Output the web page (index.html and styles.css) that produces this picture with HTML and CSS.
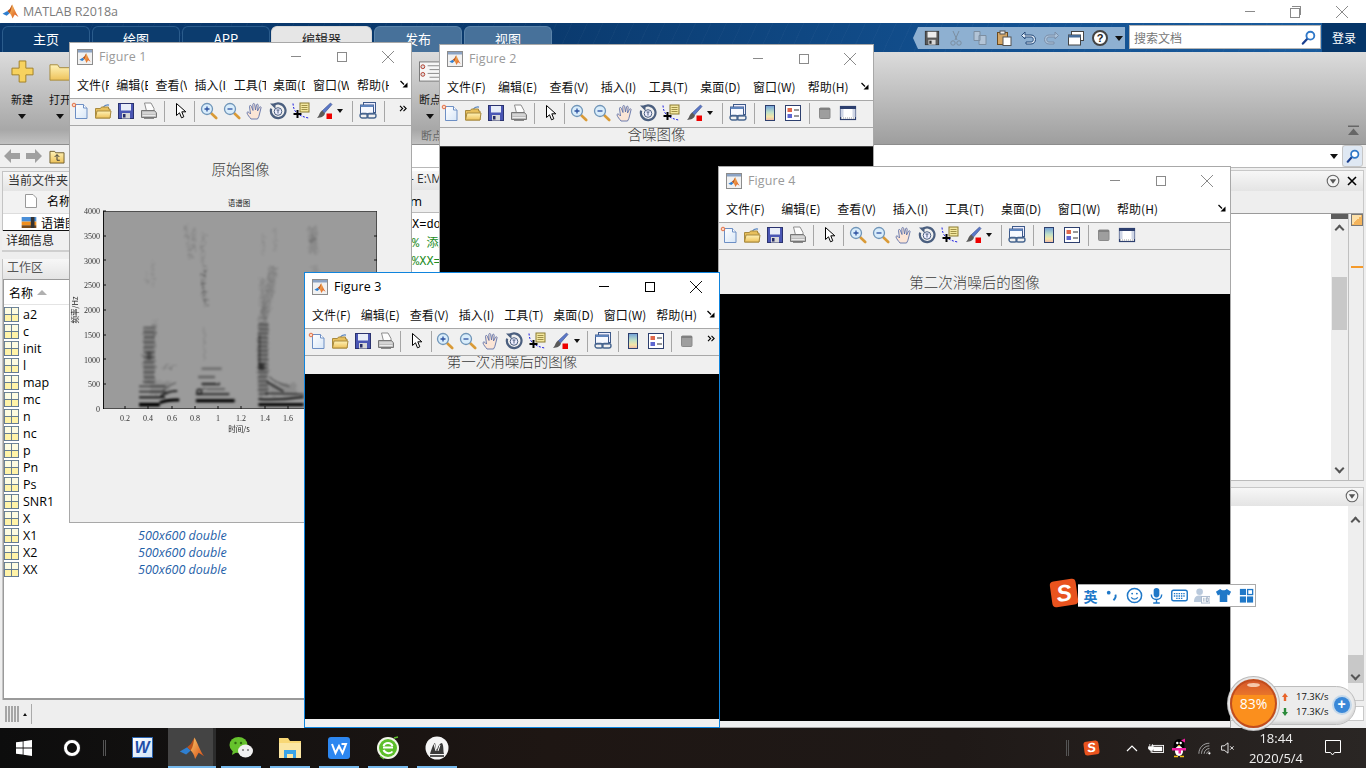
FILE: index.html
```html
<!DOCTYPE html>
<html lang="zh-CN">
<head>
<meta charset="utf-8">
<title>MATLAB R2018a</title>
<link rel="stylesheet" href="styles.css">
</head>
<body>
<svg class="sprite" aria-hidden="true">
  <defs>
    <linearGradient id="gradBar" x1="0" y1="0" x2="0" y2="1">
      <stop offset="0" stop-color="#6f9fd8"/><stop offset=".45" stop-color="#bfe0c8"/><stop offset=".75" stop-color="#f4e6a8"/><stop offset="1" stop-color="#f0b8a8"/>
    </linearGradient>
    <linearGradient id="gradOrange" x1="0" y1="0" x2="1" y2="1">
      <stop offset="0" stop-color="#f7c66a"/><stop offset="1" stop-color="#d9480f"/>
    </linearGradient>
    <linearGradient id="gradFolder" x1="0" y1="0" x2="0" y2="1">
      <stop offset="0" stop-color="#fff3b8"/><stop offset="1" stop-color="#eec25a"/>
    </linearGradient>
    <linearGradient id="gradFile" x1="0" y1="0" x2="1" y2="1">
      <stop offset="0" stop-color="#ffffff"/><stop offset="1" stop-color="#d7e6f7"/>
    </linearGradient>
    <filter id="blurS" x="-30%" y="-30%" width="160%" height="160%">
      <feTurbulence type="fractalNoise" baseFrequency=".035" numOctaves="2" seed="4" result="n"/>
      <feDisplacementMap in="SourceGraphic" in2="n" scale="5" xChannelSelector="R" yChannelSelector="G"/>
      <feGaussianBlur stdDeviation="2.600"/>
    </filter>
    <filter id="blurL" x="-30%" y="-30%" width="160%" height="160%">
      <feTurbulence type="fractalNoise" baseFrequency=".09" numOctaves="2" seed="9" result="n"/>
      <feDisplacementMap in="SourceGraphic" in2="n" scale="20" xChannelSelector="R" yChannelSelector="G"/>
      <feGaussianBlur stdDeviation="3.500"/>
    </filter>

    <symbol id="i-logo" viewBox="0 0 16 16">
      <path d="M.5 10.2 5 7.6l2.2 2L4.400 12z" fill="#2f7fd0"/>
      <path d="M5 7.600 7.300 5.600 9.500 1.500l1 6-3.300 2.100z" fill="#b9521c"/>
      <path d="M9.500 1.500c1.600 2.600 3.400 8.200 6 11.600l-3.400-2.200-2.200 3.800c-.6-2.600-1.800-4.400-2.700-5.100 1.600-2.500 1.800-5.500 2.300-8.100z" fill="url(#gradOrange)"/>
    </symbol>
    <symbol id="i-figlogo" viewBox="0 0 16 16">
      <rect x=".5" y=".5" width="15" height="15" fill="#f1f1f1" stroke="#8c8c8c"/>
      <rect x="1" y="1" width="14" height="2.500" fill="#8ba3c4"/>
      <svg x="2" y="3" width="12" height="12" viewBox="0 0 16 16"><use href="#i-logo"/></svg>
    </symbol>
    <symbol id="i-new" viewBox="0 0 18 18">
      <path d="M4.500 2.500h8l3.500 3.500v10.500H4.500z" fill="url(#gradFile)" stroke="#6d8fc4"/>
      <path d="M12.500 2.500V6H16" fill="#fff" stroke="#6d8fc4"/>
      <circle cx="3" cy="3" r="1.800" fill="#fbd6c0" stroke="#e2673a" stroke-width=".9"/>
    </symbol>
    <symbol id="i-open" viewBox="0 0 18 18">
      <path d="M9 5.500c1.500-2 4-2.800 6-2.400" fill="none" stroke="#5a86c0" stroke-width="1.200"/>
      <path d="M1.500 6.500h5l1-1.500h7v2h1.500V16H1.500z" fill="#e7bf5c" stroke="#a88a3e"/>
      <path d="M1.500 16 3 9h14l-1 7z" fill="url(#gradFolder)" stroke="#a88a3e"/>
    </symbol>
    <symbol id="i-save" viewBox="0 0 18 18">
      <rect x="1.500" y="1.500" width="15" height="15" fill="#4a56b4" stroke="#2b336f"/>
      <rect x="4" y="2" width="10" height="6.500" fill="#e8edf8"/>
      <rect x="5" y="11" width="8" height="5.500" fill="#d7d7d7"/>
      <rect x="6" y="12" width="2.500" height="3.500" fill="#252b66"/>
    </symbol>
    <symbol id="i-print" viewBox="0 0 18 18">
      <path d="M4.500 1h6.500l3 5.500v2.500H6.500z" fill="#fdfdfd" stroke="#8d8d8d"/>
      <path d="M1.500 8.500h13l2 2.500v4.500h-15z" fill="#bdbdbd" stroke="#777"/>
      <path d="M2.500 11h13M2.500 13.500h13" stroke="#ececec"/>
      <path d="M4 16.500h10" stroke="#8a8a8a"/>
    </symbol>
    <symbol id="i-cursor" viewBox="0 0 18 18">
      <path d="M5.500 1.500v12l3-2.700 2 5 2.300-1-2-5h4z" fill="#fff" stroke="#000"/>
    </symbol>
    <symbol id="i-zoomin" viewBox="0 0 18 18">
      <path d="m11 11 5.200 5" stroke="#d99a36" stroke-width="2.600" stroke-linecap="round"/>
      <circle cx="7" cy="7" r="5.500" fill="#d9edfb" stroke="#7095b8" stroke-width="1.300"/>
      <path d="M4.500 7h5M7 4.500v5" stroke="#2c50a0" stroke-width="1.300"/>
    </symbol>
    <symbol id="i-zoomout" viewBox="0 0 18 18">
      <path d="m11 11 5.200 5" stroke="#d99a36" stroke-width="2.600" stroke-linecap="round"/>
      <circle cx="7" cy="7" r="5.500" fill="#d9edfb" stroke="#7095b8" stroke-width="1.300"/>
      <path d="M4.500 7h5" stroke="#2c50a0" stroke-width="1.300"/>
    </symbol>
    <symbol id="i-hand" viewBox="0 0 18 18">
      <path d="M5 17c-1.500-2-3.500-4-4-6-.2-1 1-1.500 2-.5l1.500 1.500L3.500 4.500c-.2-1.200 1.400-1.500 1.800-.3L7 8.500 6.800 2.500c0-1.300 1.800-1.300 1.900 0L9.500 8l1-5c.2-1.200 1.800-1 1.700.2L11.500 9l2-3.800c.5-1 1.900-.4 1.500.7L13.500 12c-.3 2-1 3.500-2 5z" fill="#fbe5d6" stroke="#5e70a8" stroke-width=".9"/>
    </symbol>
    <symbol id="i-rotate" viewBox="0 0 18 18">
      <path d="M4 3.600a7.300 7.300 0 1 1-1.800 3" fill="none" stroke="#4b5f7f" stroke-width="2.200"/>
      <path d="M1 1.500h5.500V7z" fill="#4b5f7f"/>
      <circle cx="9" cy="9.500" r="3.800" fill="#eef" stroke="#4b5f7f"/>
      <path d="M7.500 8h3M9 8v3.500" stroke="#4b5f7f"/>
    </symbol>
    <symbol id="i-data" viewBox="0 0 18 18">
      <path d="M1 1.500c.5 7 3 12 15.500 14.500" fill="none" stroke="#1a1ae0" stroke-dasharray="2 1.500"/>
      <rect x="8" y="1" width="9" height="9" fill="#f4e8a0" stroke="#8a7a30"/>
      <path d="M9.500 3.500h6M9.500 5.500h6M9.500 7.500h6" stroke="#8a7a30" stroke-width=".8"/>
      <path d="M1.500 12h8M5.500 8v8" stroke="#000" stroke-width="2"/>
    </symbol>
    <symbol id="i-brush" viewBox="0 0 18 18">
      <path d="m7 9 8.500-8 1.500 1.500L9.500 11z" fill="#5b78c8" stroke="#364a8a" stroke-width=".6"/>
      <path d="M7 8.500 10 11.500c-1 3-3.500 4-8 4.500 2-1.500 2-5 5-7.500z" fill="#5a5a5a"/>
      <rect x="11.500" y="11.500" width="5.500" height="5.500" fill="#ee0000"/>
    </symbol>
    <symbol id="i-link" viewBox="0 0 18 18">
      <rect x="4.500" y=".5" width="12" height="10" fill="#eef" stroke="#3e5a8a"/>
      <rect x="1.500" y="3" width="13" height="9" fill="#f7f9ff" stroke="#3e5a8a"/>
      <rect x="1.500" y="3" width="13" height="2" fill="#5f84bd"/>
      <rect x="1" y="11.500" width="8" height="4.500" rx="2.200" fill="none" stroke="#47658f" stroke-width="1.400"/>
      <rect x="8" y="11.500" width="9" height="4.500" rx="2.200" fill="none" stroke="#47658f" stroke-width="1.400"/>
    </symbol>
    <symbol id="i-colorbar" viewBox="0 0 18 18">
      <rect x="4.500" y="1.500" width="9" height="15" fill="url(#gradBar)" stroke="#2d3f6e"/>
    </symbol>
    <symbol id="i-legend" viewBox="0 0 18 18">
      <rect x="1.500" y="1.500" width="15" height="15" fill="#fff" stroke="#2d3f6e"/>
      <rect x="3.500" y="4" width="4.500" height="4" fill="#e0694c"/>
      <rect x="3.500" y="10" width="4.500" height="4" fill="#5d66d0"/>
      <path d="M10 6h5M10 12h5" stroke="#333"/>
    </symbol>
    <symbol id="i-hide" viewBox="0 0 18 18">
      <rect x="3.500" y="4" width="10.500" height="10.500" rx="1" fill="#9e9e9e" stroke="#8a8a8a"/>
      <rect x="3.500" y="4" width="10.500" height="2" fill="#808080"/>
    </symbol>
    <symbol id="i-show" viewBox="0 0 18 18">
      <rect x="1.500" y="2.500" width="15" height="13" fill="#fff" stroke="#2d3f6e" stroke-width="1.200"/>
      <rect x="1.500" y="2.500" width="15" height="2.500" fill="#2d3f6e"/>
      <rect x="1.500" y="5" width="3" height="8" fill="#cfd6e6"/>
      <rect x="13.500" y="5" width="3" height="8" fill="#cfd6e6"/>
      <path d="M2 14h14" stroke="#999" stroke-dasharray="1 1"/>
    </symbol>
    <symbol id="i-more" viewBox="0 0 10 8">
      <path d="m1 1 3 3-3 3M5 1l3 3-3 3" fill="none" stroke="#000" stroke-width="1.300"/>
    </symbol>
    <symbol id="i-menuarrow" viewBox="0 0 8 8">
      <path d="M.5 1 4 4.500" fill="none" stroke="#000" stroke-width="1.200"/>
      <path d="M7.500 2.500v5h-5z" fill="#000"/>
    </symbol>
    <symbol id="i-mag" viewBox="0 0 16 16">
      <path d="M6.500 9.500 2 14.500" stroke="#1a3f8f" stroke-width="2.400" stroke-linecap="round"/>
      <circle cx="10" cy="6" r="4.200" fill="#fff" stroke="#2f78c8" stroke-width="2"/>
    </symbol>
    <symbol id="i-panelmenu" viewBox="0 0 14 14">
      <circle cx="7" cy="7" r="5.800" fill="#f4f4f4" stroke="#666" stroke-width="1.100"/>
      <path d="M3.800 5.300h6.400L7 9.800z" fill="#555"/>
    </symbol>
    <symbol id="i-var" viewBox="0 0 16 16">
      <rect x=".5" y=".5" width="15" height="15" fill="#fff3a8" stroke="#5d7590"/>
      <rect x="1" y="1" width="14" height="6.500" fill="#fdfbe0"/>
      <path d="M8 .5v15M.5 8h15" stroke="#5d7590"/>
    </symbol>
  </defs>
</svg>

<div class="app">
  <header class="titlebar">
    <svg class="app-logo"><use href="#i-logo"/></svg>
    <span class="app-name">MATLAB R2018a</span>
    <div class="caption main-caption">
      <span class="cap-btn"><i class="cap-min"></i></span>
      <span class="cap-btn"><i class="cap-restore"></i></span>
      <span class="cap-btn"><i class="cap-close"></i></span>
    </div>
  </header>

  <nav class="tabs">
    <span class="tab">主页</span>
    <span class="tab">绘图</span>
    <span class="tab">APP</span>
    <span class="tab tab-active">编辑器</span>
    <span class="tab tab-soft">发布</span>
    <span class="tab tab-soft">视图</span>
    <div class="quick">
      <svg class="q-icon q-gray"><use href="#i-save"/></svg>
      <svg class="q-icon q-faint" viewBox="0 0 16 16"><path d="M5 1l4 9M11 1 7 10" stroke="#666" fill="none"/><circle cx="5" cy="13" r="2.200" fill="none" stroke="#666"/><circle cx="11" cy="13" r="2.200" fill="none" stroke="#666"/></svg>
      <svg class="q-icon q-faint" viewBox="0 0 16 16"><path d="M2 1.500h6v9H2zM7 5.500h7v9H7z" fill="#ddd" stroke="#666"/></svg>
      <svg class="q-icon" viewBox="0 0 16 16"><rect x="1.500" y="2.500" width="10" height="12" fill="#d5a766" stroke="#6a4b22"/><rect x="4" y="1" width="5" height="3" fill="#eee" stroke="#555"/><rect x="7" y="7" width="8" height="8.500" fill="#fff" stroke="#555"/></svg>
      <svg class="q-icon" viewBox="0 0 16 16"><path d="M5 2 1.500 5.500 5 9V7h6c3 0 3 5 0 5H6v2h5c6 0 6-9 0-9H5z" fill="#dfeaf5" stroke="#274a78"/></svg>
      <svg class="q-icon q-faint" viewBox="0 0 16 16"><path d="m11 2 3.500 3.500L11 9V7H5c-3 0-3 5 0 5h5v2H5C-1 14-1 5 5 5h6z" fill="#cdd9e5" stroke="#667"/></svg>
      <svg class="q-icon" viewBox="0 0 16 16"><rect x="3.500" y="1.500" width="12" height="9" fill="#fff" stroke="#444"/><rect x=".5" y="5" width="12" height="10" fill="#fff" stroke="#444"/><rect x=".5" y="5" width="12" height="2.500" fill="#456c99"/></svg>
      <span class="q-help">?</span>
      <i class="q-drop"></i>
    </div>
    <div class="search">
      <span class="search-text">搜索文档</span>
      <svg class="search-mag"><use href="#i-mag"/></svg>
    </div>
    <span class="login">登录</span>
  </nav>

  <section class="ribbon">
    <div class="rb-btn rb-new">
      <svg class="rb-icon" viewBox="0 0 24 24"><path d="M8.500 1h7v7.500H23v7h-7.500V23h-7v-7.500H1v-7h7.500z" fill="#f7d25f" stroke="#a17f25"/></svg>
      <span class="rb-label">新建</span><i class="rb-drop"></i>
    </div>
    <div class="rb-btn rb-open">
      <svg class="rb-icon" viewBox="0 0 24 24"><path d="M1 5h8l2 3h12v13H1z" fill="url(#gradFolder)" stroke="#a58a3e"/></svg>
      <span class="rb-label">打开</span><i class="rb-drop"></i>
    </div>
    <div class="rb-btn rb-break">
      <svg class="rb-icon" viewBox="0 0 24 24"><rect x=".5" y="2" width="23" height="20" fill="#f6f6f6" stroke="#777"/><circle cx="4" cy="7" r="2" fill="#ddd" stroke="#b23b2b"/><circle cx="4" cy="15" r="2" fill="#ddd" stroke="#b23b2b"/><path d="M9 6h12M11 10h10M9 14h12M11 18h10" stroke="#888"/></svg>
      <span class="rb-label">断点</span><i class="rb-drop"></i>
      <span class="rb-section">断点</span>
    </div>
    <svg class="rb-collapse" viewBox="0 0 11 11"><path d="M0 .5h11V2H0z" fill="#666"/><path d="M5.500 3.500 11 10H0z" fill="#666"/></svg>
  </section>

  <div class="addr">
    <svg class="addr-arrow" viewBox="0 0 18 16"><path d="M8 1 1 8l7 7v-4h9V5H8z" fill="#a0a0a0"/></svg>
    <svg class="addr-arrow" viewBox="0 0 18 16"><path d="m10 1 7 7-7 7v-4H1V5h9z" fill="#a0a0a0"/></svg>
    <svg class="addr-up" viewBox="0 0 16 16"><path d="M.5 2.500h5l1 1.500h9v11H.5z" fill="url(#gradFolder)" stroke="#6e5c2c"/><path d="M8 6v6M5.500 8.500 8 6l2.500 2.500M8 12h3" fill="none" stroke="#333"/></svg>
    <div class="addr-field"><i class="addr-drop"></i></div>
    <span class="addr-search"><svg class="addr-mag"><use href="#i-mag"/></svg></span>
  </div>

  <main class="workarea">
    <div class="col-left">
      <section class="panel panel-files">
        <div class="panel-head">当前文件夹</div>
        <div class="col-head">
          <svg class="doc-icon" viewBox="0 0 12 14"><path d="M.5.500H8L11.500 4v9.500H.5z" fill="#fff" stroke="#999"/></svg>
          <span>名称</span>
        </div>
        <div class="file-row">
          <svg class="rar-icon" viewBox="0 0 16 12"><rect width="16" height="5" fill="#4a8fd8"/><rect y="5" width="16" height="4" fill="#f09020"/><rect y="9" width="16" height="3" fill="#7a4a18"/><rect x="10" width="4" height="12" fill="#333"/></svg>
          <span>语谱图.wav</span>
        </div>
      </section>
      <div class="details">详细信息</div>
      <section class="panel panel-work">
        <div class="panel-head panel-head-work">工作区</div>
        <div class="work-list">
          <div class="work-cols"><span>名称</span><i class="sort-up"></i></div>
          <div class="var"><svg class="var-icon"><use href="#i-var"/></svg><span class="var-name">a2</span></div>
          <div class="var"><svg class="var-icon"><use href="#i-var"/></svg><span class="var-name">c</span></div>
          <div class="var"><svg class="var-icon"><use href="#i-var"/></svg><span class="var-name">init</span></div>
          <div class="var"><svg class="var-icon"><use href="#i-var"/></svg><span class="var-name">l</span></div>
          <div class="var"><svg class="var-icon"><use href="#i-var"/></svg><span class="var-name">map</span></div>
          <div class="var"><svg class="var-icon"><use href="#i-var"/></svg><span class="var-name">mc</span></div>
          <div class="var"><svg class="var-icon"><use href="#i-var"/></svg><span class="var-name">n</span></div>
          <div class="var"><svg class="var-icon"><use href="#i-var"/></svg><span class="var-name">nc</span></div>
          <div class="var"><svg class="var-icon"><use href="#i-var"/></svg><span class="var-name">p</span></div>
          <div class="var"><svg class="var-icon"><use href="#i-var"/></svg><span class="var-name">Pn</span></div>
          <div class="var"><svg class="var-icon"><use href="#i-var"/></svg><span class="var-name">Ps</span></div>
          <div class="var"><svg class="var-icon"><use href="#i-var"/></svg><span class="var-name">SNR1</span></div>
          <div class="var"><svg class="var-icon"><use href="#i-var"/></svg><span class="var-name">X</span><span class="var-val">500x600 double</span></div>
          <div class="var"><svg class="var-icon"><use href="#i-var"/></svg><span class="var-name">X1</span><span class="var-val">500x600 double</span></div>
          <div class="var"><svg class="var-icon"><use href="#i-var"/></svg><span class="var-name">X2</span><span class="var-val">500x600 double</span></div>
          <div class="var"><svg class="var-icon"><use href="#i-var"/></svg><span class="var-name">XX</span><span class="var-val">500x600 double</span></div>
        </div>
      </section>
      <div class="status"><span class="grip"></span><i class="grip-up"></i><span class="grip-sep"></span></div>
    </div>

    <section class="editor">
      <div class="panel-head editor-head">- E:\MATLAB</div>
      <div class="editor-tabs"><span>m</span></div>
      <div class="code">
        <div class="line">X=double(X);</div>
        <div class="line comment">% 添加噪声</div>
        <div class="line comment">%XX=X+n;</div>
      </div>
    </section>

    <div class="col-right">
      <section class="right-top">
        <div class="panel-head right-head">
          <svg class="panel-menu"><use href="#i-panelmenu"/></svg>
          <svg class="panel-x" viewBox="0 0 10 10"><path d="m1 1 8 8M9 1 1 9" stroke="#000" stroke-width="1.600"/></svg>
        </div>
        <div class="right-band"></div>
        <div class="right-body">
          <div class="right-white"></div>
          <div class="vscroll vscroll-a">
            <span class="scroll-cap"></span>
            <i class="chev chev-up"></i>
            <span class="thumb thumb-a"></span>
            <i class="chev chev-down"></i>
          </div>
          <div class="strip"><span class="strip-box"></span><span class="strip-mark"></span></div>
        </div>
      </section>
      <section class="right-bottom">
        <div class="panel-head right-head right-head-2">
          <svg class="panel-menu"><use href="#i-panelmenu"/></svg>
        </div>
        <div class="right-body right-body-2">
          <div class="right-white"></div>
          <div class="vscroll vscroll-b">
            <i class="chev chev-up"></i>
            <span class="thumb thumb-b"></span>
            <i class="chev chev-down"></i>
          </div>
        </div>
      </section>
      <div class="right-foot"></div>
    </div>
  </main>
</div>

<footer class="taskbar">
  <svg class="tb-win" viewBox="0 0 16 16"><path d="M0 2.300 6.700 1.400V7.600H0zM7.500 1.300 16 0V7.600H7.500zM0 8.400H6.700V14.600L0 13.700zM7.500 8.400H16V16L7.500 14.700z" fill="#fff"/></svg>
  <span class="tb-cortana"></span>
  <span class="tb-grip"></span>
  <span class="tb-app tb-first"><span class="word-icon">W</span></span>
  <span class="tb-app tb-on tb-matlab"><svg class="tb-icon tb-mat"><use href="#i-logo"/></svg></span>
  <span class="tb-app tb-run">
    <svg class="tb-icon" viewBox="0 0 24 24"><ellipse cx="9.500" cy="9" rx="9" ry="8" fill="#66c22d"/><path d="m4 14-1 5 5-3z" fill="#66c22d"/><ellipse cx="16.500" cy="15" rx="7.500" ry="6.500" fill="#f1f1f1"/><circle cx="6.500" cy="7" r="1.200" fill="#2f6b10"/><circle cx="12" cy="7" r="1.200" fill="#2f6b10"/><circle cx="14" cy="14" r="1" fill="#777"/><circle cx="19" cy="14" r="1" fill="#777"/></svg>
  </span>
  <span class="tb-app tb-run">
    <svg class="tb-icon" viewBox="0 0 24 24"><path d="M1 2h9l2 3h11v17H1z" fill="#f8d775"/><path d="M1 7h22v15H1z" fill="#fbe6a3"/><path d="M6 14h12v8h-3v-4H9v4H6z" fill="#3aa4e8"/></svg>
  </span>
  <span class="tb-app tb-run">
    <svg class="tb-icon" viewBox="0 0 24 24"><rect x="1" y="1" width="22" height="22" rx="3" fill="#2d87f0"/><path d="m5 8 3.500 9L12 10l3.500 7L19 8h-4.500" fill="none" stroke="#fff" stroke-width="2"/></svg>
  </span>
  <span class="tb-app tb-run">
    <svg class="tb-icon" viewBox="0 0 24 24"><circle cx="12" cy="12" r="11" fill="#f2f6ea"/><circle cx="12" cy="12" r="9" fill="#5cbf2a"/><path d="M7 11.500h10M7.500 14c2 4 7 4 9 1.500M7.500 10c1.500-4 7.500-4 9 0" fill="none" stroke="#fff" stroke-width="2"/><path d="M4 20 8 23M18 2l4-1" stroke="#5cbf2a" stroke-width="1.500"/></svg>
  </span>
  <span class="tb-app tb-run">
    <svg class="tb-icon" viewBox="0 0 24 24"><circle cx="12" cy="12" r="11.500" fill="#f5f5f5"/><path d="M5 18c2-6 3-10 5-11 1 3 0 5 2 7 1-4 3-7 5-7 2 3 1 8 2 11z" fill="#3a3a3a"/><path d="M5 20h14" stroke="#555" stroke-width="2"/><path d="M9 8l2 7M15 9l-2 6" stroke="#fff"/></svg>
  </span>

  <div class="tray">
    <span class="tb-grip"></span>
    <span class="tray-sogou">S</span>
    <svg class="tray-chev" viewBox="0 0 12 8"><path d="m1 7 5-5 5 5" fill="none" stroke="#fff" stroke-width="1.200"/></svg>
    <svg class="tray-bat" viewBox="0 0 18 12"><rect x="4.500" y="2.500" width="13" height="8" fill="none" stroke="#fff"/><rect x="6" y="4" width="10" height="5" fill="#fff"/><path d="M2 1v3M5 1v3M0.500 4h6v2.500L4 8.500H3L.5 6.500zM3.500 8.500V11" fill="#fff" stroke="#fff" stroke-width=".8"/></svg>
    <svg class="tray-qq" viewBox="0 0 16 20"><ellipse cx="8" cy="8" rx="5.500" ry="7" fill="#000"/><ellipse cx="8" cy="13" rx="4" ry="5" fill="#fff"/><circle cx="6.300" cy="5" r="1.200" fill="#fff"/><circle cx="9.700" cy="5" r="1.200" fill="#fff"/><path d="M6.500 7h3L8 8.500z" fill="#f3c11a"/><path d="M1 10h14v2.500H10v3H7.500v-3H1z" fill="#ee1fa0"/><path d="M10 2.500 14 .5v4z" fill="#ee1fa0"/><path d="M3 18.500h4M9 18.500h4" stroke="#f3c11a" stroke-width="1.600"/></svg>
    <svg class="tray-wifi" viewBox="0 0 16 14"><path d="M1 13C1 6 6 1 13 1M4 13c0-5 4-9 9-9M7 13c0-3 3-6 6-6M10 13c0-1.500 1.500-3 3-3" fill="none" stroke="#a8a8a8" stroke-width="1.100"/><circle cx="13" cy="12.500" r="1.300" fill="#fff"/></svg>
    <svg class="tray-mute" viewBox="0 0 16 14"><path d="M.5 4.500h3L8 1v12L3.500 9.500h-3z" fill="none" stroke="#fff"/><path d="m10.500 5 4 4M14.500 5l-4 4" stroke="#fff"/></svg>
    <div class="clock"><span>18:44</span><span>2020/5/4</span></div>
    <svg class="tray-note" viewBox="0 0 16 16"><path d="M.5.500h15v12H9.500L7.500 15l-2-2.500h-5z" fill="none" stroke="#fff"/></svg>
  </div>
</footer>

<!-- Figure 1 -->
<article class="fig fig1">
  <div class="fig-title"><svg class="fig-icon"><use href="#i-figlogo"/></svg><span class="fig-name">Figure 1</span>
    <div class="caption"><span class="cap-btn"><i class="cap-min"></i></span><span class="cap-btn"><i class="cap-max"></i></span><span class="cap-btn"><i class="cap-close"></i></span></div></div>
  <div class="menu menu-clipped">
    <span>文件(F)</span><span>编辑(E)</span><span>查看(V)</span><span>插入(I)</span><span>工具(T)</span><span>桌面(D)</span><span>窗口(W)</span><span>帮助(H)</span>
    <svg class="menu-arrow"><use href="#i-menuarrow"/></svg>
  </div>
  <div class="toolbar">
    <span class="tool"><svg><use href="#i-new"/></svg></span><span class="tool"><svg><use href="#i-open"/></svg></span><span class="tool"><svg><use href="#i-save"/></svg></span><span class="tool"><svg><use href="#i-print"/></svg></span>
    <span class="sep sep-first"></span>
    <span class="tool"><svg><use href="#i-cursor"/></svg></span>
    <span class="sep"></span>
    <span class="tool"><svg><use href="#i-zoomin"/></svg></span><span class="tool"><svg><use href="#i-zoomout"/></svg></span><span class="tool"><svg><use href="#i-hand"/></svg></span><span class="tool"><svg><use href="#i-rotate"/></svg></span><span class="tool"><svg><use href="#i-data"/></svg></span><span class="tool"><svg><use href="#i-brush"/></svg></span><i class="tool-drop"></i>
    <span class="sep sep-wide"></span>
    <span class="tool"><svg><use href="#i-link"/></svg></span>
    <span class="sep sep-wide"></span>
    <svg class="more"><use href="#i-more"/></svg>
  </div>
  <div class="plot plot-axes">
    <h2 class="plot-title fig1-title">原始图像</h2>
    <svg class="axes" viewBox="70 180 341 341">
      <text class="ax-title" x="239" y="206" text-anchor="middle">语谱图</text>
      <svg x="103" y="211" width="274" height="198" viewBox="100 48 820 594" preserveAspectRatio="none">
        <rect x="100" y="48" width="820" height="594" fill="#9b9b9b"/>
        <g fill="none" stroke="#000" filter="url(#blurL)">
          <path d="M250 205v70M230 230v40" stroke-width="8" stroke-dasharray="3 5" opacity=".14"/>
          <path d="M348 90q4 50 14 100M372 100v70M402 115q-10 60 0 100" stroke-width="12" stroke-dasharray="4 4" opacity=".16"/>
          <path d="M405 225q-15 45 5 105" stroke-width="12" stroke-dasharray="6 7" opacity=".3"/>
          <path d="M403 395v100" stroke-width="3" opacity=".16"/>
          <path d="M580 120v60M615 100v70" stroke-width="7" stroke-dasharray="4 4" opacity=".16"/>
          <path d="M728 95v80" stroke-width="26" stroke-dasharray="4 3" opacity=".18"/>
          <path d="M728 125v16" stroke-width="16" opacity=".16"/>
          <path d="M610 215c-10 50-10 100-35 165" stroke-width="26" stroke-dasharray="4 4" opacity=".26"/>
          <path d="M578 255c-4 40 0 80 4 120" stroke-width="16" stroke-dasharray="4 4" opacity=".2"/>
          <path d="M735 215v60" stroke-width="18" stroke-dasharray="3 4" opacity=".14"/>
          <path d="m280 525 15-20M295 520l25-10" stroke-width="5" opacity=".2"/>
          <path d="M255 440v-70" stroke-width="10" stroke-dasharray="3 5" opacity=".26"/>
          <path d="M238 565V395" stroke-width="36" opacity=".16"/>
          <path d="M580 600q-4-110 0-220" stroke-width="30" opacity=".18"/>
          <path d="M240 580h60M600 585h80" stroke-width="40" opacity=".1"/>
        </g>
        <g fill="none" stroke="#000" filter="url(#blurS)">
          <path d="M238 565V395" stroke-width="32" stroke-dasharray="7 8" opacity=".32"/>
          <path d="M238 495v-25" stroke-width="14" opacity=".35"/>
          <path d="M208 629h62" stroke-width="11" opacity="1"/>
          <path d="M208 607h78" stroke-width="7" opacity=".75"/>
          <path d="M208 590h80" stroke-width="7" opacity=".5"/>
          <path d="M208 574h80" stroke-width="7" opacity=".42"/>
          <path d="M270 623q22-10 58-8" stroke-width="9" opacity="1"/>
          <path d="M272 604q22-16 50-16" stroke-width="6" opacity=".75"/>
          <path d="M278 587q18-16 40-24" stroke-width="4" opacity=".38"/>
          <path d="M378 617h116" stroke-width="10" opacity="1"/>
          <path d="M378 597h100" stroke-width="6" opacity=".75"/>
          <path d="M395 582h70" stroke-width="5" opacity=".45"/>
          <path d="M395 567h55" stroke-width="7" opacity=".75"/>
          <path d="M385 546h50" stroke-width="7" opacity=".4"/>
          <path d="M395 521h60" stroke-width="7" opacity=".32"/>
          <circle cx="388" cy="590" r="7" stroke-width="4" opacity=".85"/>
          <path d="M580 600q-4-110 0-220" stroke-width="30" stroke-dasharray="6 7" opacity=".34"/>
          <path d="M568 520V420" stroke-width="6" opacity=".4"/>
          <path d="M575 525v-20" stroke-width="16" opacity=".55"/>
          <path d="M565 629h135" stroke-width="10" opacity=".95"/>
          <path d="M565 612q50 5 135-6" stroke-width="7" opacity=".75"/>
          <path d="M585 595q40 0 115 3" stroke-width="5" opacity=".6"/>
          <path d="M590 560q15 10 50 30" stroke-width="6" opacity=".65"/>
          <path d="M598 545q10 15 60 30" stroke-width="4" opacity=".42"/>
        </g>
        <path d="M100 640.500V48.500H919.500V642" fill="none" stroke="#111" stroke-width="2.500"/>
        <path d="M101 48v594h819" fill="none" stroke="#000" stroke-width="3"/>
      </svg>
      <path class="ax-ticks" d="M103 211h3M103 236h3M103 260h3M103 285h3M103 310h3M103 335h3M103 359h3M103 384h3M125 409v-3M148 409v-3M172 409v-3M195 409v-3M218 409v-3M241 409v-3M265 409v-3M288 409v-3M311 409v-3M334 409v-3M374 236h3M374 260h3M374 285h3"/>
      <g class="ax-y" text-anchor="end">
        <text x="100" y="214">4000</text><text x="100" y="239">3500</text><text x="100" y="264">3000</text><text x="100" y="288">2500</text><text x="100" y="313">2000</text><text x="100" y="338">1500</text><text x="100" y="363">1000</text><text x="100" y="387">500</text><text x="100" y="412">0</text>
      </g>
      <g class="ax-y" text-anchor="middle">
        <text x="125" y="421">0.2</text><text x="148" y="421">0.4</text><text x="172" y="421">0.6</text><text x="195" y="421">0.8</text><text x="218" y="421">1</text><text x="241" y="421">1.2</text><text x="265" y="421">1.4</text><text x="288" y="421">1.6</text>
      </g>
      <text class="ax-title" x="239" y="432" text-anchor="middle">时间/s</text>
      <text class="ax-title" x="0" y="0" text-anchor="middle" transform="translate(78 310) rotate(-90)">频率/Hz</text>
    </svg>
  </div>
</article>

<!-- Figure 2 -->
<article class="fig fig2">
  <div class="fig-title"><svg class="fig-icon"><use href="#i-figlogo"/></svg><span class="fig-name">Figure 2</span>
    <div class="caption"><span class="cap-btn"><i class="cap-min"></i></span><span class="cap-btn"><i class="cap-max"></i></span><span class="cap-btn"><i class="cap-close"></i></span></div></div>
  <div class="menu">
    <span>文件(F)</span><span>编辑(E)</span><span>查看(V)</span><span>插入(I)</span><span>工具(T)</span><span>桌面(D)</span><span>窗口(W)</span><span>帮助(H)</span>
    <svg class="menu-arrow"><use href="#i-menuarrow"/></svg>
  </div>
  <div class="toolbar">
    <span class="tool"><svg><use href="#i-new"/></svg></span><span class="tool"><svg><use href="#i-open"/></svg></span><span class="tool"><svg><use href="#i-save"/></svg></span><span class="tool"><svg><use href="#i-print"/></svg></span>
    <span class="sep sep-first"></span>
    <span class="tool"><svg><use href="#i-cursor"/></svg></span>
    <span class="sep"></span>
    <span class="tool"><svg><use href="#i-zoomin"/></svg></span><span class="tool"><svg><use href="#i-zoomout"/></svg></span><span class="tool"><svg><use href="#i-hand"/></svg></span><span class="tool"><svg><use href="#i-rotate"/></svg></span><span class="tool"><svg><use href="#i-data"/></svg></span><span class="tool"><svg><use href="#i-brush"/></svg></span><i class="tool-drop"></i>
    <span class="sep sep-wide"></span>
    <span class="tool"><svg><use href="#i-link"/></svg></span>
    <span class="sep sep-wide"></span>
    <span class="tool"><svg><use href="#i-colorbar"/></svg></span><span class="tool"><svg><use href="#i-legend"/></svg></span>
    <span class="sep sep-wide"></span>
    <span class="tool"><svg><use href="#i-hide"/></svg></span><span class="tool"><svg><use href="#i-show"/></svg></span>
  </div>
  <div class="plot">
    <h2 class="plot-title title-strip strip-2">含噪图像</h2>
    <div class="image"></div>
  </div>
</article>

<!-- Figure 4 -->
<article class="fig fig4">
  <div class="fig-title"><svg class="fig-icon"><use href="#i-figlogo"/></svg><span class="fig-name">Figure 4</span>
    <div class="caption"><span class="cap-btn"><i class="cap-min"></i></span><span class="cap-btn"><i class="cap-max"></i></span><span class="cap-btn"><i class="cap-close"></i></span></div></div>
  <div class="menu">
    <span>文件(F)</span><span>编辑(E)</span><span>查看(V)</span><span>插入(I)</span><span>工具(T)</span><span>桌面(D)</span><span>窗口(W)</span><span>帮助(H)</span>
    <svg class="menu-arrow"><use href="#i-menuarrow"/></svg>
  </div>
  <div class="toolbar">
    <span class="tool"><svg><use href="#i-new"/></svg></span><span class="tool"><svg><use href="#i-open"/></svg></span><span class="tool"><svg><use href="#i-save"/></svg></span><span class="tool"><svg><use href="#i-print"/></svg></span>
    <span class="sep sep-first"></span>
    <span class="tool"><svg><use href="#i-cursor"/></svg></span>
    <span class="sep"></span>
    <span class="tool"><svg><use href="#i-zoomin"/></svg></span><span class="tool"><svg><use href="#i-zoomout"/></svg></span><span class="tool"><svg><use href="#i-hand"/></svg></span><span class="tool"><svg><use href="#i-rotate"/></svg></span><span class="tool"><svg><use href="#i-data"/></svg></span><span class="tool"><svg><use href="#i-brush"/></svg></span><i class="tool-drop"></i>
    <span class="sep sep-wide"></span>
    <span class="tool"><svg><use href="#i-link"/></svg></span>
    <span class="sep sep-wide"></span>
    <span class="tool"><svg><use href="#i-colorbar"/></svg></span><span class="tool"><svg><use href="#i-legend"/></svg></span>
    <span class="sep sep-wide"></span>
    <span class="tool"><svg><use href="#i-hide"/></svg></span><span class="tool"><svg><use href="#i-show"/></svg></span>
  </div>
  <div class="plot">
    <h2 class="plot-title title-strip strip-4">第二次消噪后的图像</h2>
    <div class="image image-4"></div>
  </div>
</article>

<!-- Figure 3 -->
<article class="fig fig3">
  <div class="fig-title"><svg class="fig-icon"><use href="#i-figlogo"/></svg><span class="fig-name">Figure 3</span>
    <div class="caption"><span class="cap-btn"><i class="cap-min"></i></span><span class="cap-btn"><i class="cap-max"></i></span><span class="cap-btn"><i class="cap-close"></i></span></div></div>
  <div class="menu">
    <span>文件(F)</span><span>编辑(E)</span><span>查看(V)</span><span>插入(I)</span><span>工具(T)</span><span>桌面(D)</span><span>窗口(W)</span><span>帮助(H)</span>
    <svg class="menu-arrow"><use href="#i-menuarrow"/></svg>
  </div>
  <div class="toolbar">
    <span class="tool"><svg><use href="#i-new"/></svg></span><span class="tool"><svg><use href="#i-open"/></svg></span><span class="tool"><svg><use href="#i-save"/></svg></span><span class="tool"><svg><use href="#i-print"/></svg></span>
    <span class="sep sep-first"></span>
    <span class="tool"><svg><use href="#i-cursor"/></svg></span>
    <span class="sep"></span>
    <span class="tool"><svg><use href="#i-zoomin"/></svg></span><span class="tool"><svg><use href="#i-zoomout"/></svg></span><span class="tool"><svg><use href="#i-hand"/></svg></span><span class="tool"><svg><use href="#i-rotate"/></svg></span><span class="tool"><svg><use href="#i-data"/></svg></span><span class="tool"><svg><use href="#i-brush"/></svg></span><i class="tool-drop"></i>
    <span class="sep sep-wide"></span>
    <span class="tool"><svg><use href="#i-link"/></svg></span>
    <span class="sep sep-wide"></span>
    <span class="tool"><svg><use href="#i-colorbar"/></svg></span><span class="tool"><svg><use href="#i-legend"/></svg></span>
    <span class="sep sep-wide"></span>
    <span class="tool"><svg><use href="#i-hide"/></svg></span>
    <svg class="more"><use href="#i-more"/></svg>
  </div>
  <div class="plot">
    <h2 class="plot-title title-strip strip-3">第一次消噪后的图像</h2>
    <div class="image image-3"></div>
  </div>
</article>

<!-- Sogou input bar -->
<div class="ime">
  <span class="ime-logo">S</span>
  <div class="ime-bar">
    <span class="ime-lang">英</span>
    <svg class="ime-i" viewBox="0 0 18 18"><circle cx="5" cy="6" r="2" fill="#1f78c8"/><path d="M12 8c1 2 0 4-2 6" fill="none" stroke="#1f78c8" stroke-width="2"/></svg>
    <svg class="ime-i" viewBox="0 0 18 18"><circle cx="9" cy="9" r="7.500" fill="none" stroke="#1f78c8" stroke-width="1.600"/><circle cx="6.500" cy="7" r="1" fill="#1f78c8"/><circle cx="11.500" cy="7" r="1" fill="#1f78c8"/><path d="M5.500 11c2 2.500 5 2.500 7 0" fill="none" stroke="#1f78c8" stroke-width="1.400"/></svg>
    <svg class="ime-i" viewBox="0 0 18 18"><rect x="6" y="1" width="6" height="10" rx="3" fill="#1f78c8"/><path d="M3.500 8c0 7 11 7 11 0M9 13v4M5.500 17h7" fill="none" stroke="#1f78c8" stroke-width="1.500"/></svg>
    <svg class="ime-i" viewBox="0 0 18 18"><rect x=".8" y="3.500" width="16.400" height="11" rx="2" fill="none" stroke="#1f78c8" stroke-width="1.500"/><path d="M3 7h12M3 9.500h12M5.500 12h7" stroke="#1f78c8" stroke-width="1.500" stroke-dasharray="1.500 1"/></svg>
    <svg class="ime-i" viewBox="0 0 18 18"><circle cx="7" cy="5" r="3.500" fill="#b9c9dc"/><path d="M1 16c0-6 3-7 6-7s4 2 4 7z" fill="#b9c9dc"/><rect x="9" y="10" width="9" height="7" fill="#fff" stroke="#a8b8cc"/><path d="M11.500 11.500v4M14 11.500h2v4h-2z" fill="none" stroke="#8ea3ba"/></svg>
    <svg class="ime-i" viewBox="0 0 18 18"><path d="M5.500 2 1 5l2 4 2-1v8h8V8l2 1 2-4-4.500-3C11 4 7 4 5.500 2z" fill="#1f78c8"/></svg>
    <svg class="ime-i" viewBox="0 0 18 18"><rect x="2" y="2" width="6.500" height="6.500" fill="#1f78c8"/><rect x="10.200" y="2.700" width="5.300" height="5.300" fill="#fff" stroke="#1f78c8" stroke-width="1.400"/><rect x="2" y="10" width="6.500" height="6.500" fill="#1f78c8"/><rect x="9.500" y="10" width="6.500" height="6.500" fill="#1f78c8"/></svg>
  </div>
</div>

<!-- Network speed widget -->
<div class="net">
  <div class="net-pill">
    <div class="net-rates">
      <div class="rate"><i class="rate-up"></i><span>17.3K/s</span></div>
      <div class="rate"><i class="rate-down"></i><span>17.3K/s</span></div>
    </div>
    <span class="net-plus">+</span>
  </div>
  <div class="net-ball"><span>83%</span></div>
</div>
</body>
</html>
```

FILE: styles.css
```css
:root {
  --sans: "Open Sans", "Noto Sans CJK SC", sans-serif;
  --cjk: "Noto Sans CJK SC", "Open Sans", sans-serif;
}
* { box-sizing: border-box; }
html, body { margin: 0; padding: 0; }
body {
  width: 1366px; height: 768px; overflow: hidden; position: relative;
  background: #eee; font-family: var(--sans); font-size: 12px; color: #000;
  display: flex; flex-direction: column;
}
h2 { margin: 0; font-weight: 400; }
.sprite { position: absolute; width: 0; height: 0; }
svg { display: block; overflow: hidden; }

.app { height: 728px; display: flex; flex-direction: column; flex: none; }

/* title bar */
.titlebar { height: 23px; background: #fff; display: flex; align-items: center; position: relative; flex: none; }
.app-logo { width: 17px; height: 17px; margin-left: 2px; }
.app-name { margin-left: 4px; color: #7b7b7b; font-size: 12.500px; }
.caption { display: flex; margin-left: auto; height: 29px; flex: none; }
.main-caption { height: 23px; margin-right: 1px; }
.cap-btn { width: 46px; display: flex; align-items: center; justify-content: center; }
.cap-min { width: 10px; height: 1px; background: #8a8a8a; display: block; }
.cap-max { width: 10px; height: 10px; border: 1px solid #8a8a8a; display: block; }
.cap-restore { width: 10px; height: 10px; border: 1px solid #8a8a8a; display: block; position: relative; background: #fff; margin: 2px 0 0 -2px; }
.cap-restore::before { content: ""; position: absolute; width: 8px; height: 8px; border: 1px solid #8a8a8a; border-left: 0; border-bottom: 0; top: -3px; left: 1px; }
.cap-close { width: 12px; height: 12px; display: block; background:
  linear-gradient(45deg, transparent 47%, #8a8a8a 47%, #8a8a8a 53%, transparent 53%),
  linear-gradient(-45deg, transparent 47%, #8a8a8a 47%, #8a8a8a 53%, transparent 53%); }

/* tabs */
.tabs {
  height: 29px; flex: none; display: flex; align-items: flex-end; padding-left: 2px; gap: 2px; position: relative;
  background:
    repeating-linear-gradient(115deg, rgba(255,255,255,.025) 0 1px, transparent 1px 14px),
    linear-gradient(90deg, #08366a 0, #0a3a6e 40%, #124f8e 70%, #1a5c9e 100%);
}
.tab {
  width: 88px; height: 26px; border-radius: 6px 6px 0 0; background: #0c3c6e; border: 1px solid #2b5c8c; border-bottom: 0;
  color: #fff; text-align: center; font-size: 13px; line-height: 24px; font-family: var(--cjk); flex: none;
}
.tab-active { width: 101px; background: #e6e6e6; color: #222; border-color: #d8d8d8; margin-left: -1px; }
.tab-soft { background: #47719a; border-color: #5b84aa; }
.quick {
  position: absolute; left: 913px; top: 4px; width: 212px; height: 22px; background: #8eb0d1;
  clip-path: polygon(0 50%, 5px 0, 100% 0, 100% 100%, 5px 100%);
  display: flex; align-items: center; padding-left: 11px; gap: 8px;
}
.q-icon { width: 16px; height: 16px; flex: none; }
.q-faint { opacity: .45; }
.q-gray { filter: grayscale(1); }
.q-help { width: 16px; height: 16px; border-radius: 50%; background: #fff; border: 2px solid #444; color: #222; font: bold 11px/12px "Liberation Sans", sans-serif; text-align: center; flex: none; }
.q-drop { width: 0; height: 0; border: 4px solid transparent; border-top: 5px solid #111; border-bottom: 0; flex: none; margin-left: -1px; }
.search {
  position: absolute; left: 1129px; top: 2px; width: 192px; height: 24px; background: #fff; border: 1px solid #b5b5b5;
  display: flex; align-items: center; padding: 0 4px; justify-content: space-between;
}
.search-text { color: #777; font-family: var(--cjk); font-size: 12px; }
.search-mag { width: 15px; height: 15px; }
.login { position: absolute; left: 1322px; top: 0; width: 44px; height: 29px; background: #053568; color: #fff; text-align: center; line-height: 29px; font-family: var(--cjk); font-size: 12px; }

/* ribbon */
.ribbon {
  height: 93px; flex: none; position: relative; display: flex;
  background: linear-gradient(#dcdcdc, #9e9e9e);
  border-bottom: 1px solid #8d8d8d;
}
.ribbon::before { content: ""; position: absolute; left: 0; top: 78px; width: 440px; height: 14px; background: linear-gradient(#a8a8a8, #c2c2c2); }
.rb-btn { width: 40px; display: flex; flex-direction: column; align-items: center; padding-top: 8px; flex: none; position: relative; }
.rb-new { margin-left: 2px; }
.rb-open { margin-left: -2px; }
.rb-break { margin-left: 330px; }
.rb-icon { width: 23px; height: 23px; }
.rb-label { font-family: var(--cjk); font-size: 11px; line-height: 15px; margin-top: 9px; color: #111; }
.rb-drop { width: 0; height: 0; border: 4px solid transparent; border-top: 5px solid #111; border-bottom: 0; margin-top: 7px; }
.rb-section { position: absolute; left: 11px; top: 76px; color: #666; font-family: var(--cjk); font-size: 11px; line-height: 15px; white-space: nowrap; }
.rb-collapse { position: absolute; right: 7px; top: 73px; width: 11px; height: 11px; }

/* address */
.addr { height: 23px; flex: none; display: flex; align-items: center; background: #f0f0f0; padding-left: 3px; border-bottom: 1px solid #b8b8b8; }
.addr-arrow { width: 18px; height: 16px; margin-right: 4px; flex: none; }
.addr-up { width: 16px; height: 15px; margin-left: 2px; flex: none; }
.addr-field { height: 22px; margin-left: 10px; flex: 1; background: #fff; display: flex; align-items: center; justify-content: flex-end; padding-right: 4px; }
.addr-drop { width: 0; height: 0; border: 4px solid transparent; border-top: 5px solid #111; border-bottom: 0; }
.addr-search { width: 21px; height: 22px; background: #dfe8f3; border: 1px solid #c6c6c6; border-radius: 3px; margin-right: 3px; display: flex; align-items: center; justify-content: center; flex: none; }
.addr-mag { width: 14px; height: 14px; }

/* work area */
.workarea { flex: 1; display: grid; grid-template-columns: 410px 1fr 400px; min-height: 0; }
.col-left { display: flex; flex-direction: column; padding: 3px 0 0 2px; min-height: 0; }
.panel { background: #eee; flex: none; }
.panel-head { height: 19px; background: linear-gradient(#f7f7f7, #e4e4e4); font-family: var(--cjk); font-size: 12px; line-height: 16px; padding-left: 5px; color: #333; }
.panel-files { border: 1px solid #c4c4c4; border-bottom: 0; }
.col-head { height: 23px; background: #f2f2f2; display: flex; align-items: flex-start; font-family: var(--cjk); font-size: 12px; line-height: 20px; padding-left: 22px; border-bottom: 1px solid #ddd; }
.col-head span { margin-left: 10px; }
.doc-icon { width: 12px; height: 14px; margin-top: 3px; }
.file-row { height: 16px; background: #fff; display: flex; align-items: center; font-family: var(--cjk); font-size: 12px; padding-left: 18px; border-bottom: 1px solid #111; box-sizing: content-box; }
.rar-icon { width: 16px; height: 11px; margin-right: 4px; }
.details { height: 21px; flex: none; background: #f0f0f0; font-family: var(--cjk); font-size: 12px; line-height: 18px; padding-left: 4px; color: #222; border-bottom: 2px solid #cfcfcf; margin-bottom: 7px; }
.panel-work { flex: 1; display: flex; flex-direction: column; border-left: 1px solid #c4c4c4; min-height: 0; }
.panel-head-work { height: 20px; color: #555; padding-left: 4px; flex: none; }
.work-list { flex: 1; background: #fff; border: 1px solid #9a9a9a; border-width: 1px 0 2px 1px; }
.work-cols { height: 25px; display: flex; align-items: center; font-family: var(--cjk); font-size: 12px; padding-left: 5px; border-bottom: 1px solid #e4e4e4; margin-bottom: 1px; }
.sort-up { width: 0; height: 0; border: 5px solid transparent; border-bottom: 5px solid #b0b0b0; border-top: 0; margin-left: 4px; }
.var { height: 17px; display: flex; align-items: center; }
.var-icon { width: 15px; height: 15px; flex: none; }
.var-name { width: 115px; margin-left: 4px; font-size: 12.500px; flex: none; }
.var-val { color: #1f5fa8; font-style: italic; font-size: 12.500px; }
.status { height: 28px; flex: none; display: flex; align-items: center; margin-left: -2px; padding-left: 5px; background: #eee; }
.grip { width: 15px; height: 16px; background: repeating-linear-gradient(90deg, #a6a6a6 0 2px, #eee 2px 3px); }
.grip-up { width: 0; height: 0; border: 2.500px solid transparent; border-bottom: 3px solid #111; border-top: 0; margin: 0 0 0 3px; }
.grip-sep { width: 1px; height: 20px; background: #aaa; margin-left: 4px; }

/* editor */
.editor { background: #fff; display: flex; flex-direction: column; }
.editor-head { padding-left: 0; height: 19px; margin-top: 3px; font-family: var(--sans); flex: none; }
.editor-tabs { height: 23px; background: #eee; padding-left: 0; line-height: 22px; font-size: 13px; border-bottom: 1px solid #bbb; flex: none; }
.code { padding: 3px 0 0 2px; font: 12px/18.500px "Liberation Mono", "Noto Sans CJK SC", monospace; white-space: nowrap; }
.comment { color: #228b22; }

/* right column */
.col-right { display: flex; flex-direction: column; padding: 2px 2px 0 0; }
.right-top { height: 311px; flex: none; border: 1px solid #c8c8c8; border-bottom: 1px solid #bbb; background: #eee; display: flex; flex-direction: column; }
.right-head { height: 20px; display: flex; justify-content: flex-end; align-items: center; padding-right: 6px; gap: 7px; flex: none; }
.panel-menu { width: 14px; height: 14px; }
.panel-x { width: 10px; height: 10px; }
.right-band { height: 23px; background: #eee; border-bottom: 1px solid #9a9a9a; flex: none; }
.right-body { flex: 1; display: flex; min-height: 0; }
.right-white { flex: 1; background: #fff; }
.vscroll { width: 16px; background: #eee; position: relative; display: flex; flex-direction: column; align-items: center; flex: none; }
.vscroll-a { margin-right: 1px; }
.scroll-cap { position: absolute; left: 0; top: 0; width: 17px; height: 5px; background: #5e5e5e; }
.thumb { position: absolute; left: 1px; width: 15px; background: #c8c8c8; }
.thumb-a { top: 63px; height: 53px; }
.thumb-b { left: 0; top: 149px; height: 28px; }
.chev { position: absolute; left: 5px; width: 7px; height: 7px; border: 2px solid #555; border-width: 2px 0 0 2px; }
.chev-up { transform: rotate(45deg); top: 12px; }
.chev-down { transform: rotate(225deg); bottom: 8px; }
.strip { width: 15px; border-left: 1px solid #c0c0c0; background: #eee; position: relative; flex: none; }
.strip-box { position: absolute; left: 2px; top: 0; width: 12px; height: 12px; border: 1px solid #777; background: linear-gradient(135deg, #fde0a8 50%, #f4b45c 50%); }
.strip-mark { position: absolute; left: 2px; top: 52px; width: 12px; height: 2px; background: #f59a2a; }
.right-bottom { margin-top: 6px; height: 214px; flex: none; border: 1px solid #c8c8c8; background: #eee; display: flex; flex-direction: column; }
.right-head-2 { padding-right: 4px; height: 18px; padding-bottom: 2px; }
.vscroll-b { width: 15px; }
.vscroll-b .chev-down { bottom: 21px; }
.vscroll-b .chev { left: 4px; }
.right-foot { height: 15px; flex: none; margin-top: 5px; background: #fff; border: 1px solid #c8c8c8; }

/* taskbar */
.taskbar {
  height: 40px; flex: none; display: flex; align-items: stretch; position: relative;
  background: linear-gradient(90deg, #0d0d0d 0, #131110 15%, #1e1613 40%, #1f1917 70%, #2a2624 100%);
}
.tb-win { width: 16px; height: 16px; margin: 12px 0 0 16px; flex: none; }
.tb-cortana { width: 16px; height: 16px; border: 3px solid #fff; border-radius: 50%; margin: 12px 0 0 32px; flex: none; box-shadow: 0 0 1px #aaa; }
.tb-grip { width: 3px; height: 16px; border: 1px solid #555; border-width: 0 1px; margin: 12px 0 0 23px; flex: none; }
.tb-app { display: flex; align-items: center; justify-content: center; flex: none; position: relative; height: 40px; padding-bottom: 1px; }
.tb-first { width: 40px; margin-left: 16px; }
.tb-matlab { width: 48px; margin-left: 6px; margin-right: 5px; background: linear-gradient(90deg, #444 0, #444 93%, #2c2c2c 93%); }
.tb-run { width: 40px; margin-right: 9px; }
.tb-on::after, .tb-run::after { content: ""; position: absolute; left: 0; right: 0; bottom: 0; height: 2px; background: #76b9ed; }
.tb-icon { width: 24px; height: 24px; }
.tb-mat { width: 26px; height: 26px; }
.word-icon { width: 21px; height: 21px; background: linear-gradient(135deg, #fff, #cfe3f7); border: 1px solid #2a62ad; color: #1d4fa8; font: italic bold 16px/19px "Liberation Sans", sans-serif; text-align: center; }
.tray { position: absolute; left: 1043px; right: 0; top: 0; bottom: 0; display: flex; align-items: center; }
.tray .tb-grip { margin: 0 0 0 23px; }
.tray-sogou { width: 15px; height: 14px; background: #e9531e; border-radius: 3px; color: #fff; font: italic bold 13px/14px "Liberation Sans", sans-serif; text-align: center; margin-left: 15px; transform: rotate(-8deg); flex: none; }
.tray-chev { width: 12px; height: 8px; margin-left: 27px; }
.tray-bat { width: 16px; height: 11px; margin-left: 10px; }
.tray-qq { width: 16px; height: 20px; margin-left: 7px; }
.tray-wifi { width: 14px; height: 13px; margin-left: 11px; }
.tray-mute { width: 14px; height: 12px; margin-left: 9px; }
.clock { width: 60px; margin-left: 11px; display: flex; flex-direction: column; align-items: center; color: #fff; font-size: 13px; line-height: 20px; opacity: .92; }
.tray-note { width: 16px; height: 16px; margin-left: 19px; }

/* figure windows: free-floating on the desktop */
.fig { position: absolute; background: #f0f0f0; border: 1px solid #a8a8a8; display: flex; flex-direction: column; overflow: hidden; }
.fig1 { left: 69px; top: 42px; width: 343px; height: 481px; }
.fig2 { left: 439px; top: 44px; width: 435px; height: 400px; }
.fig3 { left: 304px; top: 272px; width: 416px; height: 456px; border-color: #0f84dd; }
.fig4 { left: 718px; top: 166px; width: 513px; height: 562px; }
.fig-title { height: 29px; flex: none; background: #fff; display: flex; align-items: center; padding: 0 0 2px 7px; }
.fig-icon { width: 16px; height: 16px; flex: none; }
.fig-name { margin-left: 6px; font-size: 12.500px; color: #9a9a9a; letter-spacing: .1px; }
.fig3 .fig-name { color: #000; }
.fig3 .cap-min { background: #000; }
.fig3 .cap-max { border-color: #000; }
.fig3 .cap-close { background:
  linear-gradient(45deg, transparent 47%, #111 47%, #111 53%, transparent 53%),
  linear-gradient(-45deg, transparent 47%, #111 47%, #111 53%, transparent 53%); }
.menu { height: 27px; flex: none; background: #fff; border-bottom: 1px solid #a8a8a8; display: flex; align-items: center; padding: 0 4px 2px 7px; justify-content: space-between; font-family: var(--cjk); font-size: 12px; color: #111; white-space: nowrap; }
.menu-arrow { width: 8px; height: 8px; flex: none; }
.fig2 .menu span { margin-right: 2px; }
.fig4 .menu { justify-content: flex-start; }
.fig4 .menu span { margin-right: 16.600px; flex: none; }
.fig4 .menu .menu-arrow { margin-left: auto; }
.menu-clipped { justify-content: flex-start; }
.menu-clipped span { width: 32px; overflow: hidden; margin-right: 7.200px; flex: none; }
.menu-clipped span:nth-child(6) { margin-right: 8px; }
.menu-clipped span:nth-child(7) { width: 36px; margin-right: 8px; }
.menu-clipped .menu-arrow { margin-left: 4px; }
.toolbar { height: 27px; flex: none; background: #f0f0f0; border-bottom: 1px solid #a8a8a8; display: flex; align-items: center; position: relative; padding-bottom: 2px; }
.tool { width: 23px; height: 24px; display: flex; align-items: center; justify-content: center; flex: none; }
.tool svg { width: 18px; height: 18px; }
.tool:first-child { margin-left: -1.500px; }
.sep { width: 1px; height: 21px; background: #a6a6a6; margin: 0 2px 0 3px; flex: none; }
.sep-first { margin: 0 3.500px 0 3px; }
.sep-wide { margin: 0 3.500px 0 4.500px; }
.fig3 .sep-wide { margin: 0 3px 0 3.500px; }
.fig3 .tool:first-child { margin-left: 0; }
.tool-drop { width: 0; height: 0; border: 3px solid transparent; border-top: 4px solid #111; border-bottom: 0; margin: 0 4px 0 2px; flex: none; }
.more { width: 9px; height: 7px; margin-left: auto; margin-right: 3px; align-self: flex-start; margin-top: 6px; flex: none; }
.plot { flex: 1; display: flex; flex-direction: column; min-height: 0; }
.plot-title { font-family: var(--cjk); font-size: 14.500px; color: #3c3c3c; text-align: center; line-height: 22px; font-weight: 300; }
.title-strip { display: flex; flex-direction: column; justify-content: flex-end; overflow: hidden; flex: none; }
.strip-2 { height: 18px; padding-bottom: 1px; }
.strip-3 { height: 18px; padding-bottom: 2px; }
.strip-4 { height: 44px; padding-bottom: 1px; }
.fig1-title { padding-top: 32px; line-height: 22px; height: 54px; flex: none; }
.axes { width: 341px; height: 341px; flex: none; }
.ax-title { font: 400 7.500px "Noto Sans CJK SC", sans-serif; fill: #222; }
.ax-y { font: 8px "Liberation Serif", serif; fill: #333; }
.ax-ticks { stroke: #111; stroke-width: 1; fill: none; }
.image { flex: 1; background: #000; border-top: 1px solid #444; }
.image-3 { flex: none; height: 345px; border-top: 0; }
.image-4 { flex: none; height: 427px; border-top: 0; }

/* overlays */
.ime { position: absolute; left: 1051px; top: 580px; display: flex; align-items: flex-start; }
.ime-logo { width: 26px; height: 26px; background: #e9531e; border-radius: 4px; color: #fff; font: italic bold 23px/26px "Liberation Sans", sans-serif; text-align: center; transform: rotate(-8deg); position: relative; z-index: 1; }
.ime-bar { width: 178px; height: 23px; margin: 4px 0 0 1px; background: #fff; border: 1px solid #aaa; border-left: 0; display: flex; align-items: center; padding-left: 5.500px; gap: 5.300px; }
.ime-lang { color: #1f78c8; font-family: var(--cjk); font-weight: 700; font-size: 14px; width: 15px; line-height: 20px; }
.ime-i { width: 17px; height: 17px; flex: none; }
.net { position: absolute; left: 1230px; top: 679px; width: 128px; height: 50px; }
.net-pill { position: absolute; left: 22px; top: 7px; width: 104px; height: 39px; border-radius: 20px; background: #ececec; border: 1px solid #bdbdbd; box-shadow: inset 0 -2px 3px #d0d0d0; display: flex; align-items: center; padding: 0 0 2px 29px; }
.net-rates { display: flex; flex-direction: column; gap: 1px; }
.rate { display: flex; align-items: center; font: 9.500px/14px "Open Sans", sans-serif; color: #111; }
.rate span { margin-left: 8px; }
.rate-up, .rate-down { width: 6px; height: 8px; display: block; flex: none; }
.rate-up { background: #e8642a; clip-path: polygon(50% 0, 100% 50%, 70% 50%, 70% 100%, 30% 100%, 30% 50%, 0 50%); }
.rate-down { background: #2a8a3a; clip-path: polygon(30% 0, 70% 0, 70% 50%, 100% 50%, 50% 100%, 0 50%, 30% 50%); }
.net-plus { width: 16px; height: 16px; border-radius: 50%; background: #3a88d8; border: 0; box-shadow: 0 0 0 2px #c4d8ea; color: #fff; font: bold 14px/15px "Liberation Sans", sans-serif; text-align: center; margin-left: 5px; flex: none; }
.net-ball { position: absolute; left: 0; top: 0; width: 47px; height: 49px; border-radius: 50%; background: linear-gradient(#d5582a 0, #e8742a 30%, #fb8f1d 32%, #fb8f1d 100%); border: 2px solid #c24d1d; box-shadow: 0 0 0 2px #e8e8e8, 0 0 0 3px #bbb; color: #fff; display: flex; align-items: center; justify-content: center; font-size: 14px; }
.net-ball::before { content: ""; position: absolute; left: 15px; top: 2px; width: 13px; height: 4px; border-radius: 50%; background: rgba(255,235,215,.75); }
```
